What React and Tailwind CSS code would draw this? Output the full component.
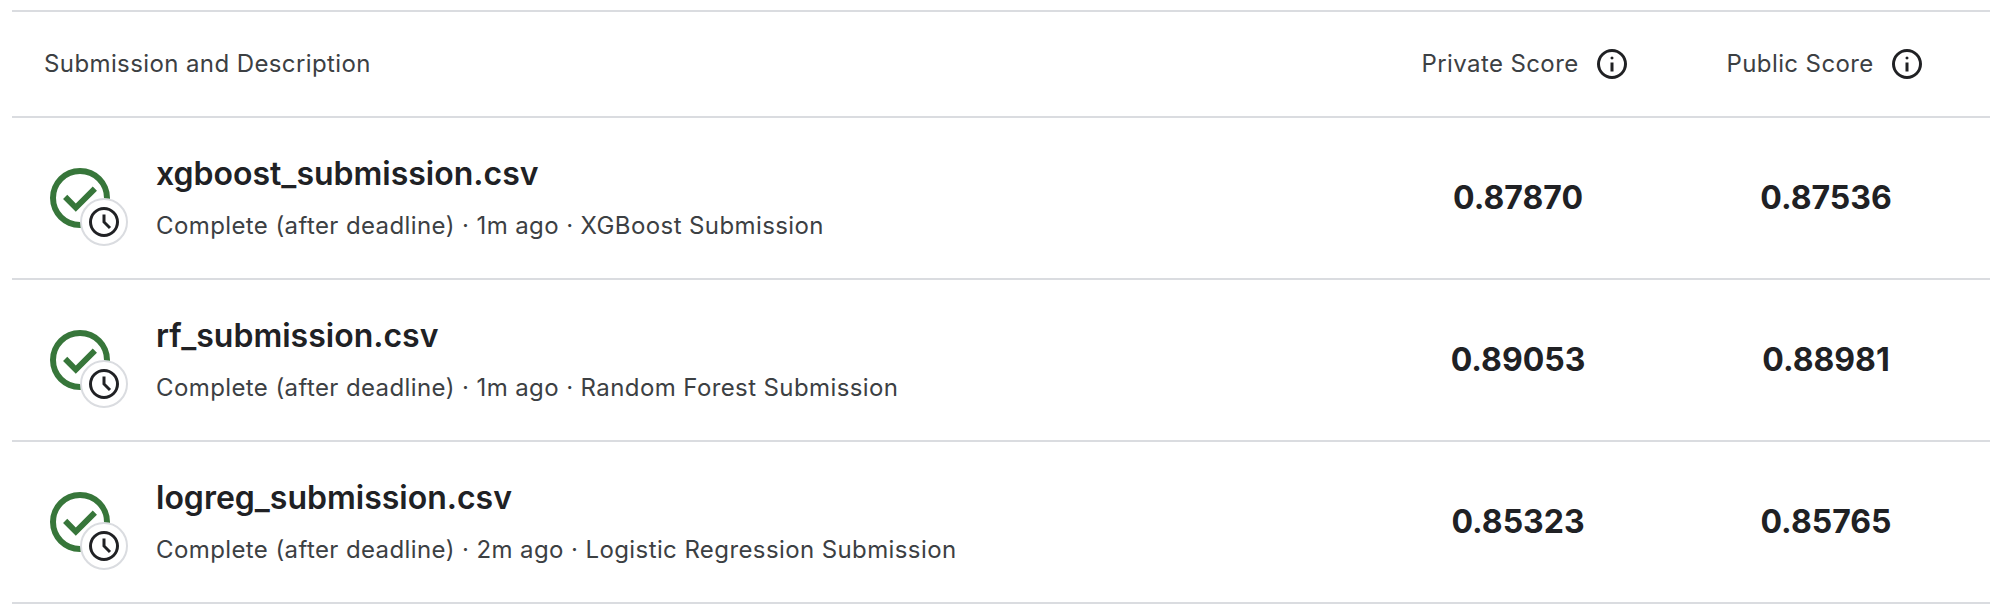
const rows = [
  { file: 'xgboost_submission.csv', detail: 'Complete (after deadline) · 1m ago · XGBoost Submission', priv: '0.87870', pub: '0.87536' },
  { file: 'rf_submission.csv', detail: 'Complete (after deadline) · 1m ago · Random Forest Submission', priv: '0.89053', pub: '0.88981' },
  { file: 'logreg_submission.csv', detail: 'Complete (after deadline) · 2m ago · Logistic Regression Submission', priv: '0.85323', pub: '0.85765' },
];

const RING = 'M12 22q-2.075 0-3.9-.788-1.825-.787-3.175-2.137-1.350-1.350-2.137-3.175Q2 14.075 2 12t.788-3.900q.787-1.825 2.137-3.175 1.350-1.350 3.175-2.137Q9.925 2 12 2t3.900.788q1.825.787 3.175 2.137 1.350 1.350 2.137 3.175Q22 9.925 22 12t-.788 3.900q-.787 1.825-2.137 3.175-1.350 1.350-3.175 2.137Q14.075 22 12 22Zm0-2q3.350 0 5.675-2.325Q20 15.350 20 12q0-3.350-2.325-5.675Q15.350 4 12 4 8.650 4 6.325 6.325 4 8.650 4 12q0 3.350 2.325 5.675Q8.650 20 12 20Z';

function InfoIcon() {
  return (
    <svg className="size-9" viewBox="0 0 24 24" fill="#202124">
      <path d={RING} />
      <path d="M11 17h2v-6h-2Zm1-8q.425 0 .713-.288Q13 8.425 13 8t-.287-.713Q12.425 7 12 7t-.712.287Q11 7.575 11 8t.288.712Q11.575 9 12 9Z" />
    </svg>
  );
}

function Status() {
  return (
    <div className="relative size-[72px] shrink-0">
      <svg className="size-[72px]" viewBox="0 0 24 24" fill="#37763a">
        <path d={RING} />
        <path d="m10.600 16.600 7.050-7.050-1.400-1.400-5.650 5.650-2.850-2.850-1.400 1.400Z" />
      </svg>
      <span className="absolute left-[36px] top-[36px] flex size-12 items-center justify-center rounded-full border-2 border-[#dadce0] bg-white">
        <svg className="size-9 shrink-0" viewBox="0 0 24 24" fill="#202124">
          <path d={RING} />
          <path d="m15.300 16.700 1.400-1.400-3.700-3.700V7h-2v5.400Z" />
        </svg>
      </span>
    </div>
  );
}

export default function App() {
  return (
    <div className="h-[606px] overflow-hidden bg-white pl-3 pt-[10px] font-['Inter',sans-serif]">
      <div className="flex h-[108px] items-center border-y-2 border-[#dadce0] pl-8 text-2xl tracking-[0.4px] text-[#3c4043]">
        <div className="flex-1">Submission and Description</div>
        <div className="flex w-[305px] items-center gap-[15.5px]">Private Score<InfoIcon /></div>
        <div className="flex w-[263.5px] items-center gap-[15.5px]">Public Score<InfoIcon /></div>
      </div>
      {rows.map((r) => (
        <div key={r.file} className="flex h-[162px] items-center border-b-2 border-[#dadce0] pl-8 text-[#202124]">
          <Status />
          <div className="flex-1 pl-10 pt-[3px]">
            <div className="text-[32px] font-semibold leading-10">{r.file}</div>
            <div className="mt-3 text-2xl leading-10 tracking-[0.4px] text-[#3c4043]">{r.detail}</div>
          </div>
          <div className="w-[305px] text-[32px] font-bold"><div className="w-[193px] text-center">{r.priv}</div></div>
          <div className="w-[263.5px] text-[32px] font-bold"><div className="w-[199px] text-center">{r.pub}</div></div>
        </div>
      ))}
    </div>
  );
}
